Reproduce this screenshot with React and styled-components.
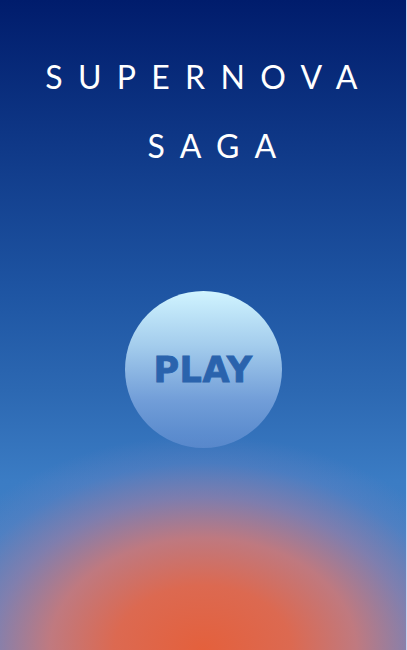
import React from "react";
import styled, { createGlobalStyle } from "styled-components";

const Global = createGlobalStyle`
  html, body { margin: 0; padding: 0; background: #c9d6f2; }
  #root { width: 406px; }
`;

const Screen = styled.main`
  width: 406px;
  height: 650px;
  overflow: hidden;
  display: flex;
  flex-direction: column;
  align-items: center;
  background:
    radial-gradient(ellipse 295px 215px at 50% 100%, rgba(228,96,60,1) 0%, rgba(226,104,76,0.96) 30%, rgba(208,120,118,0.88) 52%, rgba(165,125,160,0.62) 71%, rgba(115,130,190,0.3) 87%, rgba(90,130,200,0) 100%),
    linear-gradient(180deg, #001c6c 0%, #0f3887 22%, #1e55a3 45%, #2c68b2 60%, #3b7cc4 74%, #4a86c6 100%);
  font-family: "Lato", "Open Sans", sans-serif;
`;

const Title = styled.h1`
  margin: 42px 0 0 0;
  width: 100%;
  display: flex;
  flex-direction: column;
  align-items: stretch;
  color: #ffffff;
  font-family: "Lato", "Open Sans", sans-serif;
  font-weight: 400;
  font-size: 32px;
  line-height: 69px;
  letter-spacing: 15.3px;
`;

const TitleLine = styled.span`
  display: block;
  text-align: center;
  padding-left: ${(p) => p.$indent}px;
`;

const PlayButton = styled.button`
  margin-top: 111px;
  width: 157px;
  height: 157px;
  border: none;
  border-radius: 50%;
  padding: 0;
  cursor: pointer;
  display: flex;
  align-items: center;
  justify-content: center;
  background: linear-gradient(180deg, rgba(208,244,255,1) 0%, rgba(170,210,240,0.95) 35%, rgba(130,170,225,0.8) 70%, rgba(110,150,215,0.55) 100%);
  color: #2a63ad;
  font-family: "DejaVu Sans", "Liberation Sans", sans-serif;
  font-weight: 700;
  font-size: 35px;
  letter-spacing: 0.5px;
  -webkit-text-stroke: 0.8px #2a63ad;
`;

export default function App() {
  return (
    <>
      <Global />
      <Screen>
        <Title>
          <TitleLine $indent={12}>SUPERNOVA</TitleLine>
          <TitleLine $indent={33}>SAGA</TitleLine>
        </Title>
        <PlayButton>PLAY</PlayButton>
      </Screen>
    </>
  );
}
